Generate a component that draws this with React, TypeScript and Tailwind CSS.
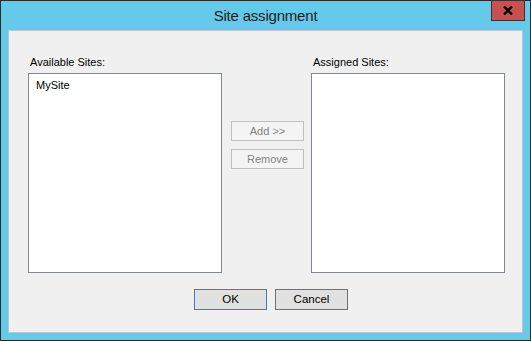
import React from "react";

const font = { fontFamily: '"Liberation Sans", Arial, sans-serif' };

const ListBox = ({ items }: { items: string[] }) => (
  <div className="w-[194px] h-[200px] border border-[#828790] bg-white pl-[7px] pt-[4px]">
    {items.map((item) => (
      <div key={item} className="text-[11px] leading-[15px] text-[#000]">
        {item}
      </div>
    ))}
  </div>
);

const Button = ({
  label,
  disabled = false,
  primary = false,
}: {
  label: string;
  disabled?: boolean;
  primary?: boolean;
}) => {
  if (disabled) {
    return (
      <button className="w-[73px] h-[20px] border border-[#bfbfbf] bg-[#f4f4f4] text-[11px] text-[#838383] leading-none">
        {label}
      </button>
    );
  }
  return (
    <button
      className={
        primary
          ? "w-[73px] h-[21px] border border-[#3c7fb1] bg-[#e1e1e1] text-[11.5px] text-black leading-none"
          : "w-[73px] h-[21px] border border-[#707070] bg-[#e1e1e1] text-[11.5px] text-black leading-none"
      }
    >
      {label}
    </button>
  );
};

export default function App() {
  return (
    <div
      className="w-[531px] h-[341px] border border-[#2b2b2b] bg-[#65c9e9] flex flex-col"
      style={font}
    >
      {/* Title bar */}
      <div className="relative h-[29px] flex items-center justify-center">
        <span className="text-[15px] text-[#1e1e1e] leading-none tracking-[-0.2px]">
          Site assignment
        </span>
        <div className="absolute top-[-1px] right-[5px] w-[34px] h-[21px] bg-[#c75050] border border-[#4a2a2a] flex items-center justify-center">
          <svg width="10" height="9" viewBox="0 0 10 9">
            <path d="M1 0.5 L9 8.5 M9 0.5 L1 8.5" stroke="#000" strokeWidth="2.4" />
          </svg>
        </div>
      </div>

      {/* Body */}
      <div className="mx-[7px] mb-[7px] flex-1 bg-[#f0f0f0] border border-[#b9c9d1] flex flex-col pl-[19px] pt-[23px]">
        <div className="flex">
          {/* Available */}
          <div className="flex flex-col">
            <div className="text-[11px] leading-[16px] text-[#000] pl-[2px] mb-[3px]">
              Available Sites:
            </div>
            <ListBox items={["MySite"]} />
          </div>

          {/* Middle buttons */}
          <div className="w-[89px] flex flex-col pl-[9px] pt-[67px] gap-[8px]">
            <Button label="Add >>" disabled />
            <Button label="Remove" disabled />
          </div>

          {/* Assigned */}
          <div className="flex flex-col">
            <div className="text-[11px] leading-[16px] text-[#000] pl-[2px] mb-[3px]">
              Assigned Sites:
            </div>
            <ListBox items={[]} />
          </div>
        </div>

        {/* Footer */}
        <div className="flex gap-[8px] pl-[166px] mt-[16px]">
          <Button label="OK" primary />
          <Button label="Cancel" />
        </div>
      </div>
    </div>
  );
}
